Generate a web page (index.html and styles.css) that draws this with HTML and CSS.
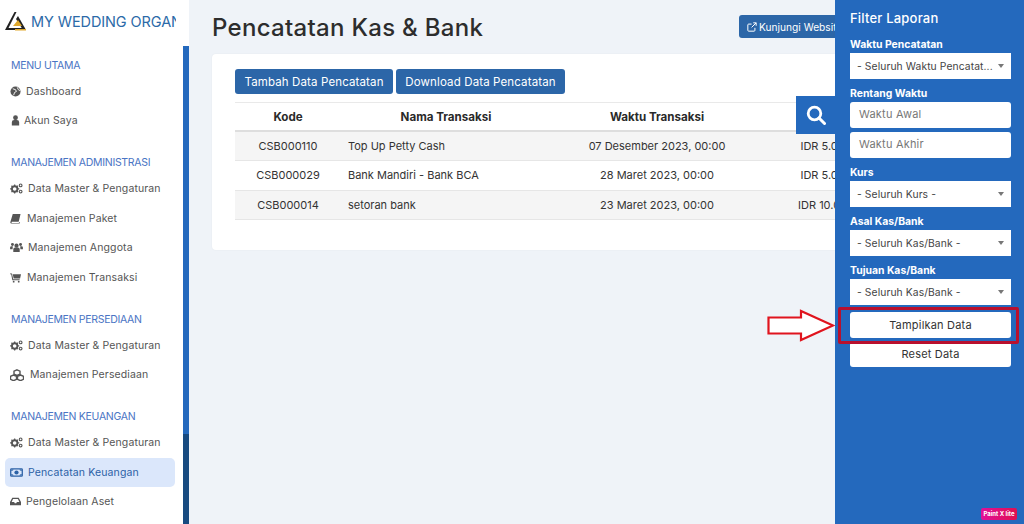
FILE: index.html
```html
<!DOCTYPE html>
<html lang="id">
<head>
<meta charset="utf-8">
<title>Pencatatan Kas &amp; Bank</title>
<link rel="stylesheet" href="styles.css">
</head>
<body>
<svg class="defs" width="0" height="0" aria-hidden="true">
  <symbol id="i-cogs" viewBox="0 0 14 12">
    <circle cx="5" cy="6.5" r="3" fill="none" stroke="currentColor" stroke-width="2"/>
    <path d="M5 1.5v2M5 9.5v2M0 6.5h2M8 6.5h2M1.5 3l1.4 1.4M7.1 8.6l1.4 1.4M8.5 3L7.1 4.4M2.9 8.6L1.5 10" stroke="currentColor" stroke-width="1.3"/>
    <circle cx="11.5" cy="2.6" r="1.5" fill="none" stroke="currentColor" stroke-width="1.2"/>
    <circle cx="11.5" cy="9.4" r="1.5" fill="none" stroke="currentColor" stroke-width="1.2"/>
  </symbol>
</svg>
<div class="app">
  <aside class="sidebar">
    <div class="brand">
      <svg class="logo" viewBox="0 0 22 20" width="22" height="20">
        <path d="M0 19L9.500 1h2L3.500 17H20v2z" fill="#222"/>
        <path d="M11 8l2-3 8 14h-3z" fill="#222"/>
        <path d="M8 15l5-6 4 6z" fill="#e0a92e"/>
        <path d="M10 18h11v1.500H10z" fill="#e0a92e"/>
      </svg>
      <span class="brand-name">MY WEDDING ORGANIZER</span>
    </div>
    <div class="side-body">
      <nav class="menu">
        <div class="sec first">MENU UTAMA</div>
        <a class="item"><svg class="ic" viewBox="0 0 12 12"><circle cx="6" cy="6" r="5.500" fill="currentColor"/><path d="M3 3l3 1 1 2-2 1-1 3M8 1.500l1 2.500 2 1" fill="none" stroke="#fff" stroke-width="1"/></svg><span class="l5">Dashboard</span></a>
        <a class="item"><svg class="ic" viewBox="0 0 12 12"><circle cx="6" cy="3" r="2.600" fill="currentColor"/><path d="M2 11.500V8a2.500 2.500 0 0 1 2.500-2.500h3A2.500 2.500 0 0 1 10 8v3.500z" fill="currentColor"/></svg><span class="l3">Akun Saya</span></a>
        <div class="sec">MANAJEMEN ADMINISTRASI</div>
        <a class="item"><svg class="ic wide"><use href="#i-cogs"/></svg><span class="l5">Data Master &amp; Pengaturan</span></a>
        <a class="item"><svg class="ic" viewBox="0 0 12 12"><path d="M3 1h8.500L9.500 9.500H2A1.200 1.200 0 0 0 2 11h7.500l.5-1 1 .2-.5 1.300H1.500A1.500 1.500 0 0 1 .5 9.500z" fill="currentColor"/></svg><span class="l6">Manajemen Paket</span></a>
        <a class="item"><svg class="ic wide" viewBox="0 0 14 12"><circle cx="7" cy="4" r="2.300" fill="currentColor"/><circle cx="2.600" cy="2.800" r="1.600" fill="currentColor"/><circle cx="11.400" cy="2.800" r="1.600" fill="currentColor"/><path d="M3.500 11V8a2 2 0 0 1 2-2h3a2 2 0 0 1 2 2v3zM0 8V6a1.500 1.500 0 0 1 1.500-1.500H3L2.700 8zM14 8V6a1.500 1.500 0 0 0-1.500-1.500H11l.3 3.500z" fill="currentColor"/></svg><span class="l5">Manajemen Anggota</span></a>
        <a class="item"><svg class="ic" viewBox="0 0 12 12"><path d="M0 1.500h2.200L3.500 8h7V9h-8L1.300 2.500H0zM3 2.500h9l-1 4.500H4z" fill="currentColor"/><circle cx="4" cy="10.500" r="1" fill="currentColor"/><circle cx="9.500" cy="10.500" r="1" fill="currentColor"/></svg><span class="l6">Manajemen Transaksi</span></a>
        <div class="sec">MANAJEMEN PERSEDIAAN</div>
        <a class="item"><svg class="ic wide"><use href="#i-cogs"/></svg><span class="l5">Data Master &amp; Pengaturan</span></a>
        <a class="item"><svg class="ic cubes" viewBox="0 0 14 12"><path d="M7 .8l3 1.400v3L7 6.500 4 5.200v-3zM3.500 6l3 1.300v3l-3 1.400-3-1.400v-3zM10.500 6l3 1.300v3l-3 1.400-3-1.400v-3z" fill="none" stroke="currentColor" stroke-width="1.400"/></svg><span class="l6">Manajemen Persediaan</span></a>
        <div class="sec">MANAJEMEN KEUANGAN</div>
        <a class="item"><svg class="ic wide"><use href="#i-cogs"/></svg><span class="l5">Data Master &amp; Pengaturan</span></a>
        <a class="item active"><svg class="ic wide" viewBox="0 0 14 12"><rect x=".7" y="2" width="12.600" height="8" rx=".8" fill="none" stroke="currentColor" stroke-width="1.400"/><circle cx="7" cy="6" r="2.300" fill="currentColor"/><path d="M1 3.500h2v-1M13 3.500h-2v-1M1 8.500h2v1M13 8.500h-2v1" stroke="currentColor" fill="none"/></svg><span class="l5">Pencatatan Keuangan</span></a>
        <a class="item"><svg class="ic" viewBox="0 0 12 12"><path d="M2.500 2h7L12 6.500V10H0V6.500zM3.300 3.200L1.800 6.500h2.700l.7 1.300h1.600l.7-1.300h2.700L8.700 3.200z" fill="currentColor" fill-rule="evenodd"/></svg><span class="l5">Pengelolaan Aset</span></a>
      </nav>
      <div class="track"><div class="thumb"></div><div class="thumb-rest"></div></div>
    </div>
  </aside>

  <main class="main">
    <header class="top">
      <h1>Pencatatan Kas &amp; Bank</h1>
      <a class="visit">
        <svg viewBox="0 0 12 12" width="10" height="10"><path d="M9.500 7v3a1 1 0 0 1-1 1H2a1 1 0 0 1-1-1V3.500a1 1 0 0 1 1-1h3.500M7.500 1h3.500v3.500M11 1L5.500 6.500" fill="none" stroke="currentColor" stroke-width="1.200"/></svg>
        Kunjungi Website
      </a>
    </header>
    <section class="card">
      <div class="actions">
        <a class="btn">Tambah Data Pencatatan</a>
        <a class="btn">Download Data Pencatatan</a>
      </div>
      <table class="tbl">
        <thead>
          <tr><th class="c1">Kode</th><th class="c2">Nama Transaksi</th><th class="c3">Waktu Transaksi</th><th class="c4">Jumlah Transaksi</th></tr>
        </thead>
        <tbody>
          <tr><td class="mid">CSB000110</td><td>Top Up Petty Cash</td><td class="mid">07 Desember 2023, 00:00</td><td class="mid">IDR 5.000.000,00</td></tr>
          <tr><td class="mid">CSB000029</td><td>Bank Mandiri - Bank BCA</td><td class="mid">28 Maret 2023, 00:00</td><td class="mid">IDR 5.000.000,00</td></tr>
          <tr><td class="mid">CSB000014</td><td>setoran bank</td><td class="mid">23 Maret 2023, 00:00</td><td class="mid">IDR 10.000.000,00</td></tr>
        </tbody>
      </table>
    </section>
  </main>

  <a class="search-tab">
    <svg viewBox="0 0 20 20" width="20" height="20"><circle cx="8.500" cy="8.500" r="6.300" fill="none" stroke="#fff" stroke-width="2.800"/><path d="M13 13l5.500 5.500" stroke="#fff" stroke-width="3" stroke-linecap="round"/></svg>
  </a>

  <aside class="filter">
    <h2>Filter Laporan</h2>
    <label class="lbl">Waktu Pencatatan</label>
    <div class="select"><span>- Seluruh Waktu Pencatat...</span><i class="caret"></i></div>
    <label class="lbl">Rentang Waktu</label>
    <div class="input">Waktu Awal</div>
    <div class="input gap">Waktu Akhir</div>
    <label class="lbl">Kurs</label>
    <div class="select"><span>- Seluruh Kurs -</span><i class="caret"></i></div>
    <label class="lbl">Asal Kas/Bank</label>
    <div class="select"><span>- Seluruh Kas/Bank -</span><i class="caret"></i></div>
    <label class="lbl">Tujuan Kas/Bank</label>
    <div class="select"><span>- Seluruh Kas/Bank -</span><i class="caret"></i></div>
    <a class="fbtn first-btn">Tampilkan Data</a>
    <a class="fbtn">Reset Data</a>
  </aside>

  <div class="highlight"></div>
  <svg class="arrow" viewBox="0 0 68 33" width="68" height="33"><path d="M1.500 8.500H34V2L66 16.500 34 31v-6.500H1.500z" fill="#fff" stroke="#e0141e" stroke-width="2.200"/></svg>
  <div class="badge">Paint X lite</div>
</div>
</body>
</html>
```

FILE: styles.css
```css
* { box-sizing: border-box; }
html, body { margin: 0; height: 100%; }
body { font-family: "Inter", "Liberation Sans", sans-serif; color: #333; overflow: hidden; }
.defs { position: absolute; }
.app { position: relative; display: flex; width: 1024px; height: 524px; overflow: hidden; background: #eff3f8; }

.sidebar { flex: 0 0 189px; width: 189px; min-width: 0; display: flex; flex-direction: column; background: #fff; height: 524px; }
.brand { flex: 0 0 46px; display: flex; align-items: center; gap: 4px; padding: 0 13px 4px 5px; overflow: hidden; white-space: nowrap; }
.logo { flex: none; }
.brand-name { flex: 1; min-width: 0; font-size: 14.500px; font-weight: 400; color: #2c6aa8; letter-spacing: -.1px; overflow: hidden; }
.side-body { flex: 1; display: flex; min-height: 0; }
.menu { flex: 1; min-width: 0; padding: 0 8px 0 5px; overflow: hidden; }
.track { flex: 0 0 6px; display: flex; flex-direction: column; }
.thumb { flex: 0 0 388px; background: #2469bd; }
.thumb-rest { flex: 1; background: #174a80; }
.sec { height: 17px; line-height: 17px; margin: 18.500px 0 3px 6px; font-size: 10.500px; letter-spacing: -.3px; color: #4a74c4; white-space: nowrap; }
.sec.first { margin-top: 10.500px; }
.item { display: flex; align-items: center; height: 29.500px; padding-left: 5px; font-size: 10.500px; color: #555; letter-spacing: .12px; white-space: nowrap; border-radius: 5px; }
.item.active { background: #dbe7fb; color: #2c62a6; }
.ic { width: 11px; height: 11px; flex: none; color: #555; }
.ic.wide { width: 13px; height: 11px; }
.ic.cubes { width: 14px; height: 12px; }
.active .ic { color: #2c62a6; }
.l3 { margin-left: 3px; }
.l5 { margin-left: 5px; }
.l6 { margin-left: 6px; }

.main { flex: 1; min-width: 0; padding: 0 0 0 23px; }
.top { display: flex; align-items: center; height: 54px; }
h1 { margin: 2px 0 0; font-size: 24px; line-height: 28px; font-weight: 500; color: #2d2d2d; letter-spacing: .3px; flex: 0 0 527px; white-space: nowrap; }
.visit { display: inline-flex; align-items: center; gap: 2px; height: 23px; width: 130px; margin-bottom: 1px; padding-left: 8px; background: #2c66a8; color: #fff; border-radius: 3px; font-size: 10.200px; white-space: nowrap; flex: none; }
.card { width: 740px; height: 196px; background: #fff; border-radius: 4px; padding: 15px 23px; box-shadow: 0 0 2px rgba(0,0,0,.05); }
.actions { display: flex; gap: 3px; height: 25px; }
.btn { display: flex; align-items: center; justify-content: center; height: 25px; background: #2c66a8; color: #fff; font-size: 11.500px; border-radius: 3px; white-space: nowrap; letter-spacing: .13px; }
.btn:first-child { width: 158px; }
.btn:last-child { width: 169px; }
.tbl { margin-top: 8px; width: 694px; border-collapse: collapse; table-layout: fixed; font-size: 11px; color: #333; }
.tbl th { height: 28.500px; border-top: 1px solid #e9e9e9; border-bottom: 2px solid #dedede; font-size: 11.600px; font-weight: 700; color: #2a2a2a; text-align: center; white-space: nowrap; }
.tbl td { height: 29.500px; padding: 0 7px; border-bottom: 1px solid #e6e6e6; white-space: nowrap; overflow: hidden; }
.tbl tbody tr:nth-child(odd) { background: #f5f5f5; }
.tbl .mid { text-align: center; }
.c1 { width: 106px; }
.c2 { width: 210px; }
.c3 { width: 212px; }
.c4 { width: 166px; }

.search-tab { position: absolute; left: 796px; top: 96px; width: 39px; height: 38px; background: #2469bd; display: flex; align-items: center; justify-content: flex-start; padding-left: 10px; }
.filter { position: absolute; top: 0; right: 0; width: 189px; height: 524px; background: #2469bd; padding: 10px 13px 0 15px; color: #fff; }
.filter h2 { margin: 0 0 12px; font-size: 13px; line-height: 16px; font-weight: 500; letter-spacing: .2px; }
.lbl { display: block; font-size: 10.400px; line-height: 14px; font-weight: 700; margin-bottom: 1px; white-space: nowrap; }
.select { display: flex; align-items: center; justify-content: space-between; height: 26px; background: #fff; padding: 0 7px; margin-bottom: 8px; font-size: 10.300px; color: #444; white-space: nowrap; letter-spacing: .1px; }
.select span { overflow: hidden; }
.caret { width: 0; height: 0; border-left: 3px solid transparent; border-right: 3px solid transparent; border-top: 4px solid #777; flex: none; }
.input { height: 26px; line-height: 25px; background: #fff; border-radius: 3px; padding-left: 9px; font-size: 11px; color: #777; letter-spacing: .2px; margin-bottom: 4px; }
.input.gap { margin-bottom: 8px; }
.fbtn { display: flex; align-items: center; justify-content: center; height: 25.500px; background: #fff; border-radius: 3px; font-size: 11px; color: #333; margin-bottom: 4px; letter-spacing: .2px; }
.first-btn { margin-top: -1px; }

.highlight { position: absolute; left: 838px; top: 307px; width: 181px; height: 37px; border: 3px solid #b8102e; border-radius: 2px; }
.arrow { position: absolute; left: 767px; top: 309px; }
.badge { position: absolute; left: 981px; top: 508px; width: 36px; height: 12px; line-height: 12px; border-radius: 2px; background: linear-gradient(90deg, #e0109a, #e01050); color: #fff; font-size: 6px; font-weight: 700; text-align: center; white-space: nowrap; }
```
